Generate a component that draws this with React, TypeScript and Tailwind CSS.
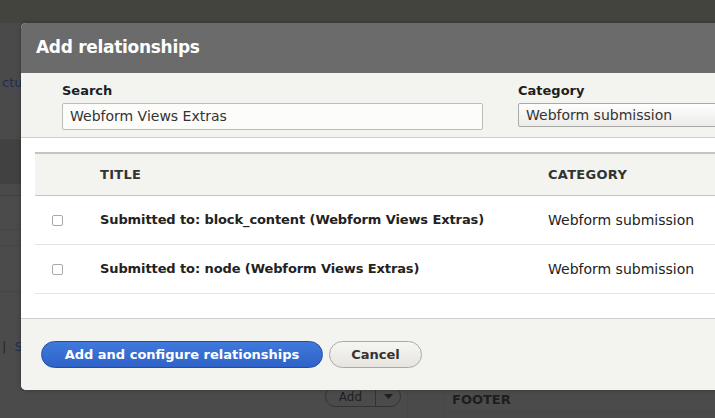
import React from "react";

const font = { fontFamily: '"DejaVu Sans", Verdana, sans-serif' };

function Checkbox() {
  return <span className="block w-[11px] h-[11px] rounded-[2px] border border-[#a8a8a8] bg-white" />;
}

export default function App() {
  const rows = [
    "Submitted to: block_content (Webform Views Extras)",
    "Submitted to: node (Webform Views Extras)",
  ];
  return (
    <div className="relative w-[715px] h-[418px] overflow-hidden bg-[#4b4b4b]" style={font}>
      {/* background page (dimmed) */}
      <div className="flex flex-col h-full">
        <div className="h-[23px] bg-[#44443f] shrink-0" />
        <div className="h-[117px] bg-[#4a4a4a] shrink-0 border-b border-[#444] pl-[2px] pt-[50px] text-[13px] text-[#1f2d52]">
          ctu
        </div>
        <div className="h-[44px] bg-[#414141] shrink-0" />
        <div className="h-[12px] bg-[#4a4a4a] border-b border-[#424242] shrink-0" />
        <div className="h-[34px] bg-[#4b4b4b] border-b border-[#464646] shrink-0" />
        <div className="h-[16px] bg-[#4b4b4b] border-b border-[#464646] shrink-0" />
        <div className="h-[46px] bg-[#4b4b4b] border-b border-[#464646] shrink-0" />
        <div className="h-[96px] bg-[#4b4b4b] shrink-0 flex items-start pt-[45px] pl-[2px] text-[13px] text-[#1f2d52] gap-[8px]">
          <span className="text-[#262626]">|</span>
          <span>S</span>
        </div>
        <div className="flex-1 flex bg-[#4b4b4b]">
          <div className="w-[408px] flex justify-end pr-[6px] border-r border-[#474747]">
            <div className="h-[21px] -mt-[2px] flex rounded-full border border-[#333] text-[12px] text-[#1f1f1f] overflow-hidden">
              <span className="px-[13px] leading-[20px]">Add</span>
              <span className="w-[25px] border-l border-[#333] flex items-center justify-center">
                <svg width="9" height="5" viewBox="0 0 9 5"><path d="M0 0h9L4.5 5z" fill="#1f1f1f" /></svg>
              </span>
            </div>
          </div>
          <div className="w-[37px] bg-[#4a4a4a] border-r border-[#474747]" />
          <div className="flex-1">
            <div className="h-[24px] border-b border-[#474747] pl-[7px] pt-[2px] text-[13px] font-bold text-[#1e1e1e]">FOOTER</div>
          </div>
        </div>
      </div>

      {/* dialog */}
      <div className="absolute left-[21px] top-[23px] w-[760px] h-[367px] rounded-[5px] overflow-hidden flex flex-col bg-white shadow-[0_0_4px_rgba(0,0,0,0.3)]">
        <div className="h-[50px] bg-[#6b6b6b] shrink-0 flex items-center pl-[15px]">
          <h1 className="text-[17px] font-bold text-white tracking-[-0.3px]">Add relationships</h1>
        </div>
        <div className="h-[65px] shrink-0 bg-[#f3f3ef] border-b border-[#cfcfca] flex pl-[41px] pt-[9px]">
          <div className="flex flex-col w-[456px]">
            <label className="text-[13px] font-bold text-[#1e1e1e] leading-[18px] mb-[3px]">Search</label>
            <div className="w-[421px] h-[27px] border border-[#bcbcb8] bg-[#fcfcfa] rounded-[2px] flex items-center pl-[7px] text-[14px] text-[#333]">
              Webform Views Extras
            </div>
          </div>
          <div className="flex flex-col">
            <label className="text-[13px] font-bold text-[#1e1e1e] leading-[18px] mb-[3px]">Category</label>
            <div className="w-[260px] h-[24px] border border-[#a9a9a5] bg-gradient-to-b from-[#fefefe] to-[#ececea] rounded-[2px] flex items-center pl-[7px] text-[14px] text-[#333]">
              Webform submission
            </div>
          </div>
        </div>
        <div className="flex-1 bg-white pl-[14px] pt-[14px]">
          <div className="border-t-[2px] border-[#c4c4c0]">
            <div className="h-[42px] bg-[#f3f3ef] border-b border-[#c4c4c0] flex items-center text-[13px] font-semibold text-[#333]">
              <span className="w-[65px]" />
              <span className="w-[448px] tracking-[0.3px]">TITLE</span>
              <span className="tracking-[0.3px]">CATEGORY</span>
            </div>
            {rows.map((r) => (
              <div key={r} className="h-[49px] border-b border-[#e5e4df] flex items-center text-[#222]">
                <span className="w-[65px] pl-[17px]"><Checkbox /></span>
                <span className="w-[448px] font-bold text-[13px] tracking-[-0.1px]">{r}</span>
                <span className="text-[14px]">Webform submission</span>
              </div>
            ))}
          </div>
        </div>
        <div className="h-[72px] shrink-0 bg-[#f3f3ef] border-t border-[#cfcfca] flex items-center pl-[20px] gap-[6px]">
          <button className="h-[27px] w-[282px] rounded-full bg-gradient-to-b from-[#4079db] to-[#2f62c8] border border-[#1e4ea8] text-white text-[13px] font-bold">
            Add and configure relationships
          </button>
          <button className="h-[27px] w-[93px] rounded-full bg-gradient-to-b from-[#f6f6f3] to-[#e6e5df] border border-[#a9a9a5] text-[#333] text-[13px] font-bold">
            Cancel
          </button>
        </div>
      </div>
    </div>
  );
}
